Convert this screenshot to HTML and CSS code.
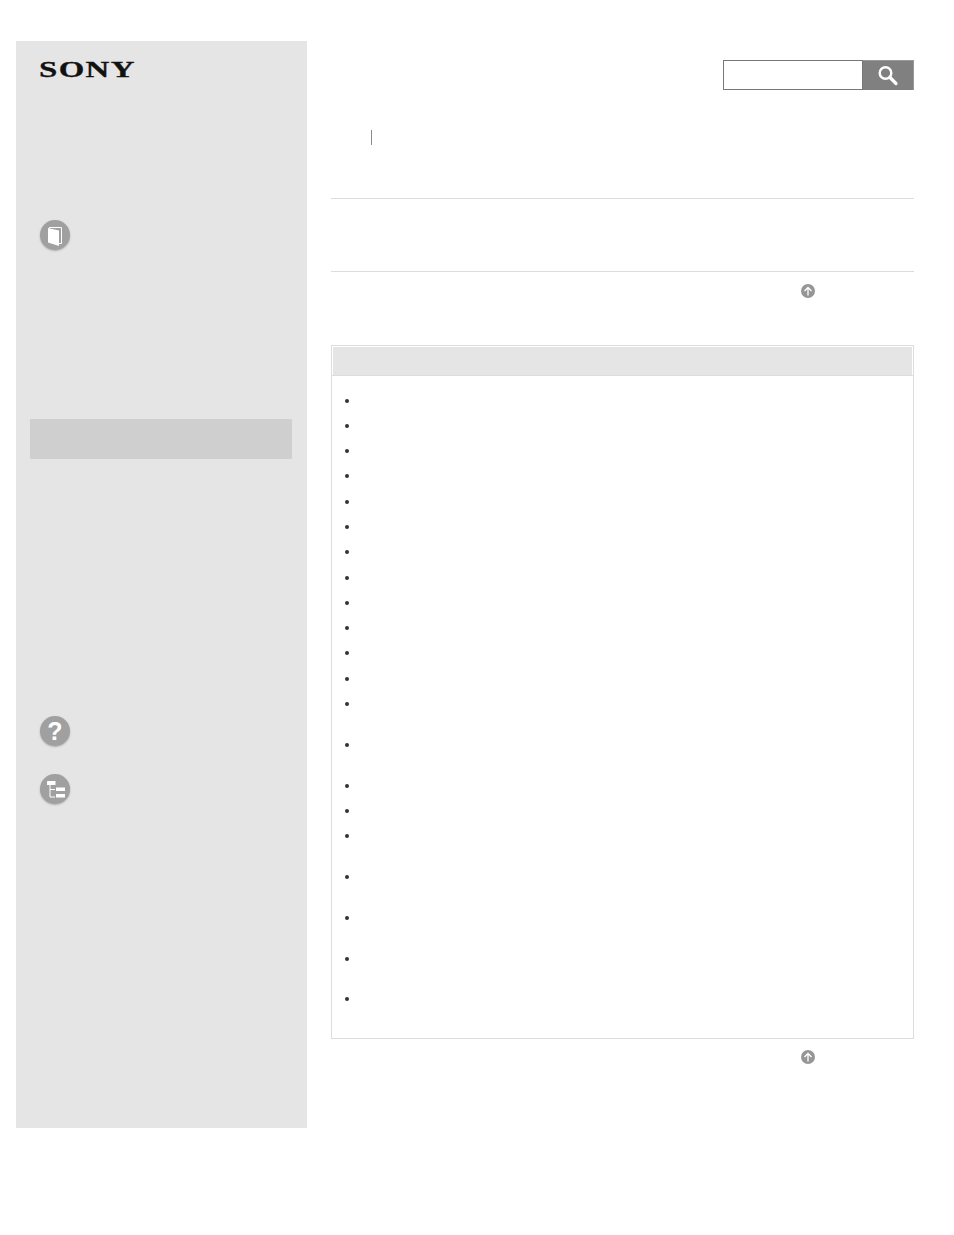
FILE: index.html
```html
<!DOCTYPE html>
<html lang="en">
<head>
    <meta charset="UTF-8">
    <meta name="viewport" content="width=device-width, initial-scale=1.0">
    <title>Help Guide</title>
    <link rel="stylesheet" href="styles.css">
</head>
<body>
    <div class="sidebar">
        <div class="logo">SONY</div>
        <div class="round-icon icon-book">
            <svg width="30" height="30" viewBox="0 0 30 30">
                <path d="M9 7.500h12.500v16H19" fill="none" stroke="#fff" stroke-width="1"/>
                <path d="M8 8l11 2.500V26L8 22.500z" fill="#fff"/>
            </svg>
        </div>
        <div class="nav-active"></div>
        <div class="round-icon icon-help"><span>?</span></div>
        <div class="round-icon icon-map">
            <svg width="30" height="30" viewBox="0 0 30 30">
                <rect x="7" y="7" width="8.500" height="4" rx="0.500" fill="#fff"/>
                <rect x="16" y="13.500" width="9" height="3.500" fill="#fff"/>
                <rect x="16" y="20" width="9" height="3.500" fill="#fff"/>
                <path d="M10 11v12h5M10 15.500h5" fill="none" stroke="#fff" stroke-width="1"/>
            </svg>
        </div>
    </div>

    <div class="main">
        <div class="search">
            <div class="search-input"></div>
            <div class="search-button">
                <svg width="51" height="30" viewBox="0 0 51 30">
                    <circle cx="22.500" cy="13" r="5.800" fill="none" stroke="#fff" stroke-width="2.400"/>
                    <path d="M27 17.500l6 6" fill="none" stroke="#fff" stroke-width="3.200" stroke-linecap="round"/>
                </svg>
            </div>
        </div>
        <div class="crumb"><span class="crumb-sep"></span></div>
        <div class="title-block"></div>
        <div class="top-row">
            <svg class="up-icon" width="14" height="14" viewBox="0 0 14 14">
                <circle cx="7" cy="7" r="7" fill="#969696"/>
                <path d="M7 11.500V3.500M3.500 7L7 3.500 10.500 7" fill="none" stroke="#fff" stroke-width="1.300"/>
            </svg>
        </div>
        <div class="box">
            <div class="box-head"></div>
            <ul class="box-list">
                <li></li>
                <li></li>
                <li></li>
                <li></li>
                <li></li>
                <li></li>
                <li></li>
                <li></li>
                <li></li>
                <li></li>
                <li></li>
                <li></li>
                <li class="tall"></li>
                <li class="tall"></li>
                <li></li>
                <li></li>
                <li class="tall"></li>
                <li class="tall"></li>
                <li class="tall"></li>
                <li class="tall"></li>
                <li class="tall"></li>
            </ul>
        </div>
        <div class="top-row bottom">
            <svg class="up-icon" width="14" height="14" viewBox="0 0 14 14">
                <circle cx="7" cy="7" r="7" fill="#969696"/>
                <path d="M7 11.500V3.500M3.500 7L7 3.500 10.500 7" fill="none" stroke="#fff" stroke-width="1.300"/>
            </svg>
        </div>
    </div>
</body>
</html>
```

FILE: styles.css
```css
body {
    font-family: "Liberation Sans", Arial, sans-serif;
    background-color: #fff;
    display: flex;
    align-items: flex-start;
    margin: 0;
    height: 1235px;
    overflow: hidden;
}
.sidebar {
    background: #e5e5e5;
    width: 291px;
    height: 1087px;
    margin: 41px 24px 0 16px;
    flex-shrink: 0;
    display: flex;
    flex-direction: column;
}
.logo {
    font-family: "Liberation Serif", serif;
    font-weight: bold;
    font-size: 24px;
    line-height: 24px;
    letter-spacing: 1px;
    color: #111;
    -webkit-text-stroke: 0.3px #111;
    margin: 16px 0 0 23px;
    transform: scaleX(1.37);
    transform-origin: left center;
}
.round-icon {
    width: 30px;
    height: 30px;
    border-radius: 50%;
    background: #a0a0a0;
    box-shadow: 0 1px 2px rgba(0, 0, 0, 0.25);
    margin-left: 24px;
}
.round-icon svg {
    display: block;
}
.icon-book {
    margin-top: 139px;
}
.nav-active {
    background: #cfcfcf;
    width: 262px;
    height: 40px;
    margin: 169px 0 0 14px;
    border-radius: 1px;
}
.icon-help {
    margin-top: 257px;
    text-align: center;
    color: #fff;
    font-weight: bold;
    font-size: 25px;
    line-height: 30px;
}
.icon-map {
    margin-top: 28px;
}
.main {
    width: 583px;
    flex-shrink: 0;
}
.search {
    display: flex;
    justify-content: flex-end;
    margin-top: 60px;
}
.search-input {
    width: 138px;
    height: 28px;
    background: #fff;
    border: 1px solid #777;
}
.search-button {
    width: 51px;
    height: 30px;
    background: #808080;
    box-shadow: inset 0 1px 0 #999, inset -1px 0 0 #999;
}
.search-button svg {
    display: block;
}
.crumb {
    height: 109px;
    padding: 40px 0 0 40px;
    box-sizing: border-box;
    border-bottom: 1px solid #ddd;
}
.crumb-sep {
    display: block;
    width: 1px;
    height: 15px;
    background: #8a8a8a;
}
.title-block {
    height: 72px;
    border-bottom: 1px solid #ddd;
}
.top-row {
    height: 73px;
    padding: 12px 0 0 470px;
    box-sizing: border-box;
}
.top-row.bottom {
    padding-top: 11px;
}
.up-icon {
    display: block;
}
.box {
    border: 1px solid #ddd;
    box-sizing: border-box;
    height: 694px;
}
.box-head {
    background: #e5e5e5;
    height: 28px;
    margin: 1px 1px 0;
}
.box-list {
    list-style: none;
    margin: 0;
    padding: 13.5px 0 0;
    border-top: 1px solid #ddd;
}
.box-list li {
    position: relative;
    height: 25.3px;
}
.box-list li.tall {
    height: 40.8px;
}
.box-list li::before {
    content: "";
    position: absolute;
    left: 13px;
    top: 9px;
    width: 4px;
    height: 4px;
    border-radius: 50%;
    background: #333;
}
```
